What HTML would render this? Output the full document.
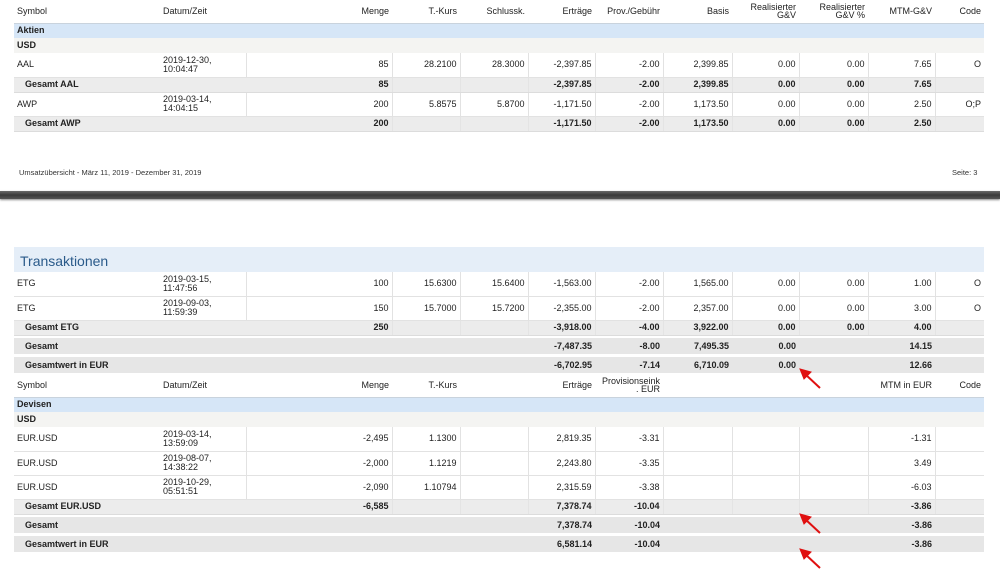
<!DOCTYPE html>
<html><head><meta charset="utf-8"><style>
*{margin:0;padding:0;box-sizing:border-box}
body{width:1000px;height:587px;background:#fff;position:relative;overflow:hidden;font-family:"Liberation Sans",Arial,sans-serif;font-size:9px;color:#222}
table{position:absolute;left:14px;width:970px;border-collapse:collapse;table-layout:fixed}
td{padding:0 3px;text-align:right;white-space:nowrap;overflow:hidden;line-height:9px}
td.l{text-align:left}
tr.h td{height:23px;border-bottom:1px solid #c9d3dd;vertical-align:middle}
tr.h td.two{line-height:8px}
tr.sec td{background:#d6e6f7;height:15px;font-weight:bold;text-align:left}
tr.cur td{background:#f4f4f2;height:15px;font-weight:bold;text-align:left}
tr.d td{height:24px;border-bottom:1px solid #e2e2e2;border-left:1px solid #e2e2e2}
tr.d td.l{border-left:none}
tr.g td{height:15px;background:#ececec;font-weight:bold;border-bottom:1px solid #dcdcdc;border-left:1px solid #e4e4e4}
tr.g td.l{padding-left:11px;border-left:none;text-align:left}
tr.g td.n{border-left:none}
tr.gap td{height:3px;background:#fff}
tr.g2 td{height:16px;background:#e6e6e6;font-weight:bold}
tr.g2 td.l{padding-left:11px}
.bar{position:absolute;left:0;top:191px;width:1000px;height:8px;background:linear-gradient(#6a6a6a,#3a3a3a 50%,#555);box-shadow:0 1px 2px #888}
.tr{position:absolute;left:14px;top:247px;width:970px;height:25px;background:#e5eef8;color:#2a5a8a;font-size:14px;padding:6px 0 0 6px}
</style></head><body>
<table style="top:0">
<colgroup><col style="width:146px"><col style="width:86px"><col style="width:146px"><col style="width:68px"><col style="width:68px"><col style="width:67px"><col style="width:68px"><col style="width:69px"><col style="width:67px"><col style="width:69px"><col style="width:67px"><col style="width:49px"></colgroup>
<tr class="h"><td class="l">Symbol</td><td class="l">Datum/Zeit</td><td>Menge</td><td>T.-Kurs</td><td>Schlussk.</td><td>Erträge</td><td>Prov./Gebühr</td><td>Basis</td><td class="two">Realisierter<br>G&amp;V</td><td class="two">Realisierter<br>G&amp;V %</td><td>MTM-G&amp;V</td><td>Code</td></tr>
<tr class="sec"><td colspan="12">Aktien</td></tr>
<tr class="cur"><td colspan="12">USD</td></tr>
<tr class="d"><td class="l">AAL</td><td class="l">2019-12-30,<br>10:04:47</td><td>85</td><td>28.2100</td><td>28.3000</td><td>-2,397.85</td><td>-2.00</td><td>2,399.85</td><td>0.00</td><td>0.00</td><td>7.65</td><td>O</td></tr>
<tr class="g"><td colspan="2" class="l">Gesamt AAL</td><td class="n">85</td><td></td><td></td><td>-2,397.85</td><td>-2.00</td><td>2,399.85</td><td>0.00</td><td>0.00</td><td>7.65</td><td></td></tr>
<tr class="d"><td class="l">AWP</td><td class="l">2019-03-14,<br>14:04:15</td><td>200</td><td>5.8575</td><td>5.8700</td><td>-1,171.50</td><td>-2.00</td><td>1,173.50</td><td>0.00</td><td>0.00</td><td>2.50</td><td>O;P</td></tr>
<tr class="g"><td colspan="2" class="l">Gesamt AWP</td><td class="n">200</td><td></td><td></td><td>-1,171.50</td><td>-2.00</td><td>1,173.50</td><td>0.00</td><td>0.00</td><td>2.50</td><td></td></tr>
</table>
<div style="position:absolute;left:19px;top:168px;font-size:7.5px;color:#333">Umsatzübersicht - März 11, 2019 - Dezember 31, 2019</div>
<div style="position:absolute;left:952px;top:168px;font-size:7.5px;color:#333">Seite: 3</div>
<div class="bar"></div>
<div class="tr">Transaktionen</div>
<table style="top:272px">
<colgroup><col style="width:146px"><col style="width:86px"><col style="width:146px"><col style="width:68px"><col style="width:68px"><col style="width:67px"><col style="width:68px"><col style="width:69px"><col style="width:67px"><col style="width:69px"><col style="width:67px"><col style="width:49px"></colgroup>
<tr class="d"><td class="l">ETG</td><td class="l">2019-03-15,<br>11:47:56</td><td>100</td><td>15.6300</td><td>15.6400</td><td>-1,563.00</td><td>-2.00</td><td>1,565.00</td><td>0.00</td><td>0.00</td><td>1.00</td><td>O</td></tr>
<tr class="d"><td class="l">ETG</td><td class="l">2019-09-03,<br>11:59:39</td><td>150</td><td>15.7000</td><td>15.7200</td><td>-2,355.00</td><td>-2.00</td><td>2,357.00</td><td>0.00</td><td>0.00</td><td>3.00</td><td>O</td></tr>
<tr class="g"><td colspan="2" class="l">Gesamt ETG</td><td class="n">250</td><td></td><td></td><td>-3,918.00</td><td>-4.00</td><td>3,922.00</td><td>0.00</td><td>0.00</td><td>4.00</td><td></td></tr>
<tr class="gap"><td colspan="12"></td></tr>
<tr class="g2"><td colspan="2" class="l">Gesamt</td><td></td><td></td><td></td><td>-7,487.35</td><td>-8.00</td><td>7,495.35</td><td>0.00</td><td></td><td>14.15</td><td></td></tr>
<tr class="gap"><td colspan="12"></td></tr>
<tr class="g2"><td colspan="2" class="l">Gesamtwert in EUR</td><td></td><td></td><td></td><td>-6,702.95</td><td>-7.14</td><td>6,710.09</td><td>0.00</td><td></td><td>12.66</td><td></td></tr>
</table>
<table style="top:374px">
<colgroup><col style="width:146px"><col style="width:86px"><col style="width:146px"><col style="width:68px"><col style="width:68px"><col style="width:67px"><col style="width:68px"><col style="width:69px"><col style="width:67px"><col style="width:69px"><col style="width:67px"><col style="width:49px"></colgroup>
<tr class="h"><td class="l">Symbol</td><td class="l">Datum/Zeit</td><td>Menge</td><td>T.-Kurs</td><td></td><td>Erträge</td><td class="two">Provisionseink<br>. EUR</td><td></td><td></td><td></td><td>MTM in EUR</td><td>Code</td></tr>
<tr class="sec"><td colspan="12">Devisen</td></tr>
<tr class="cur"><td colspan="12">USD</td></tr>
<tr class="d"><td class="l">EUR.USD</td><td class="l">2019-03-14,<br>13:59:09</td><td>-2,495</td><td>1.1300</td><td></td><td>2,819.35</td><td>-3.31</td><td></td><td></td><td></td><td>-1.31</td><td></td></tr>
<tr class="d"><td class="l">EUR.USD</td><td class="l">2019-08-07,<br>14:38:22</td><td>-2,000</td><td>1.1219</td><td></td><td>2,243.80</td><td>-3.35</td><td></td><td></td><td></td><td>3.49</td><td></td></tr>
<tr class="d"><td class="l">EUR.USD</td><td class="l">2019-10-29,<br>05:51:51</td><td>-2,090</td><td>1.10794</td><td></td><td>2,315.59</td><td>-3.38</td><td></td><td></td><td></td><td>-6.03</td><td></td></tr>
<tr class="g"><td colspan="2" class="l">Gesamt EUR.USD</td><td class="n">-6,585</td><td></td><td></td><td>7,378.74</td><td>-10.04</td><td></td><td></td><td></td><td>-3.86</td><td></td></tr>
<tr class="gap"><td colspan="12"></td></tr>
<tr class="g2"><td colspan="2" class="l">Gesamt</td><td></td><td></td><td></td><td>7,378.74</td><td>-10.04</td><td></td><td></td><td></td><td>-3.86</td><td></td></tr>
<tr class="gap"><td colspan="12"></td></tr>
<tr class="g2"><td colspan="2" class="l">Gesamtwert in EUR</td><td></td><td></td><td></td><td>6,581.14</td><td>-10.04</td><td></td><td></td><td></td><td>-3.86</td><td></td></tr>
</table>
<svg width="1000" height="587" style="position:absolute;left:0;top:0">
<g fill="#e01010" stroke="#e01010" stroke-width="2">
<line x1="820" y1="388" x2="805" y2="374"/><polygon points="800,369 811,372 804,379" stroke-width="1"/>
<line x1="820" y1="533" x2="805" y2="519"/><polygon points="800,514 811,517 804,524" stroke-width="1"/>
<line x1="820" y1="568" x2="805" y2="554"/><polygon points="800,549 811,552 804,559" stroke-width="1"/>
</g></svg>
</body></html>
